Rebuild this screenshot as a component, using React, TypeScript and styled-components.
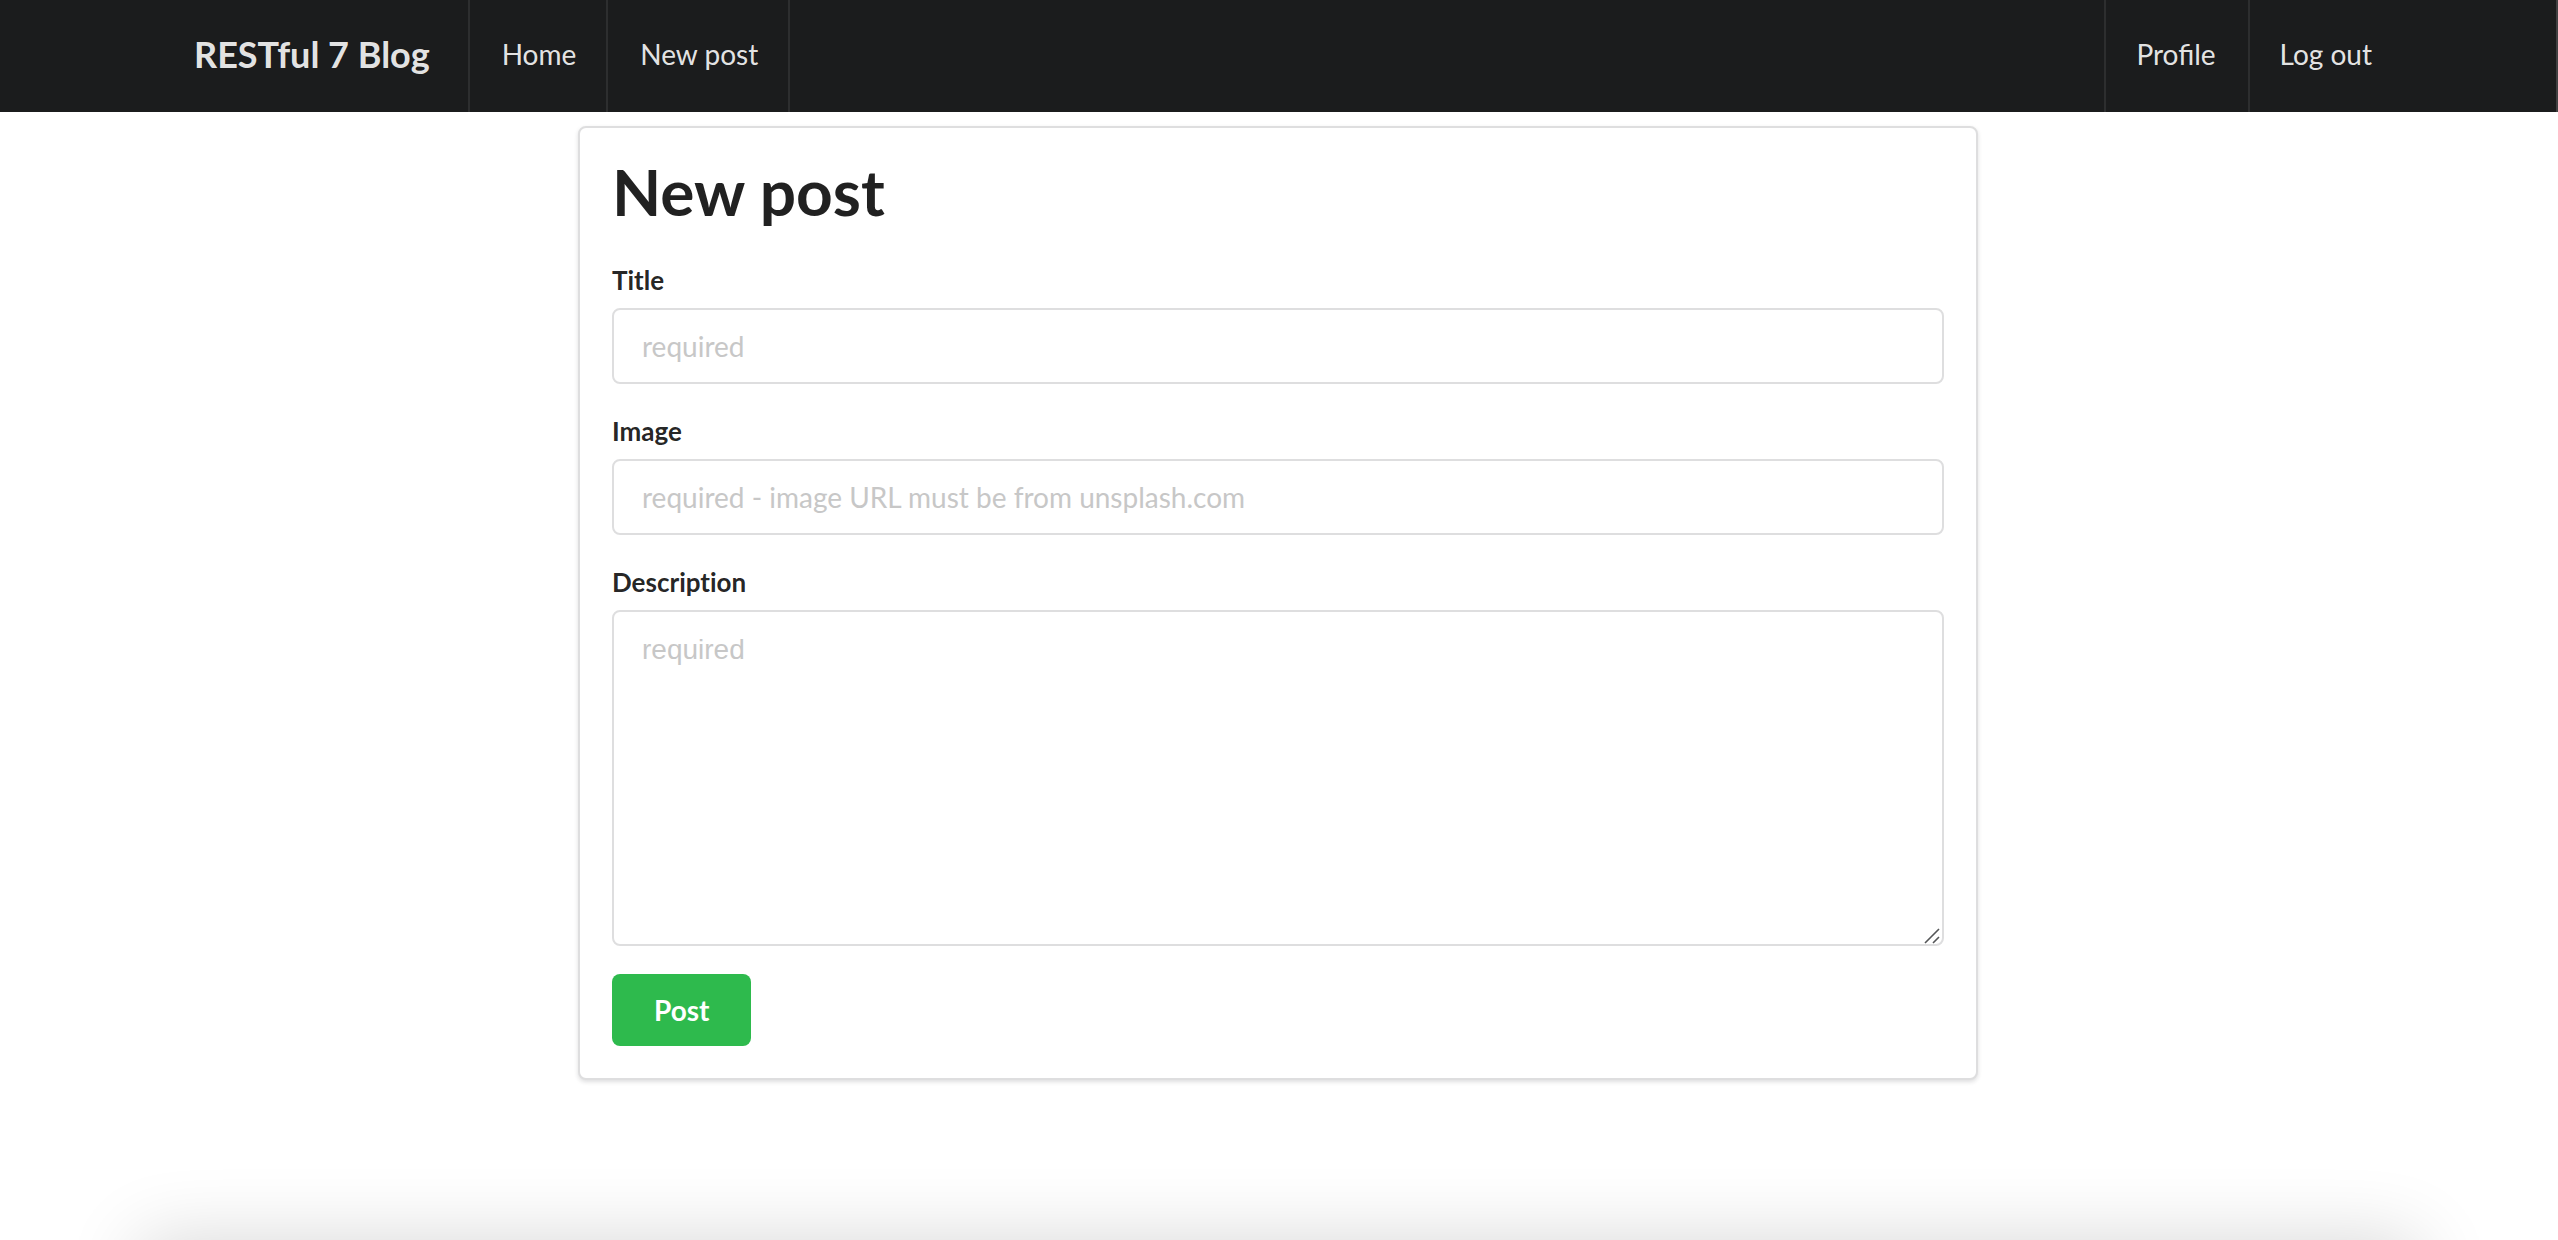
import React from "react";
import styled, { createGlobalStyle } from "styled-components";

const GlobalStyle = createGlobalStyle`
  *, *::before, *::after { box-sizing: border-box; }
  body {
    margin: 0;
    background: #fff;
    color: rgba(0, 0, 0, 0.87);
    font-family: Lato, "Liberation Sans", sans-serif;
    font-size: 28px;
  }
`;

const Page = styled.div`
  min-height: 100vh;
`;

const NavBar = styled.nav`
  height: 112px;
  background: #1b1c1d;
  border-right: 2px solid #414142;
`;

const NavContainer = styled.div`
  display: flex;
  height: 100%;
  width: 100%;
  max-width: 2252px;
  margin: 0 auto;
`;

const NavGroup = styled.div<{ $end?: boolean }>`
  display: flex;
  margin-left: ${(p) => (p.$end ? "auto" : "0")};
`;

const NavLink = styled.a<{ $edge?: "left" | "right" }>`
  display: flex;
  align-items: center;
  padding: ${(p) => (p.$edge === "left" ? "0 32px 4px 30px" : "0 30px 4px 32px")};
  color: rgba(255, 255, 255, 0.9);
  line-height: 36px;
  text-decoration: none;
  border-${(p) => p.$edge ?? "right"}: 2px solid #2d2e2f;
`;

const BrandLink = styled(NavLink)`
  padding: 0 38px 4px 42px;
  font-size: 36px;
  font-weight: 700;
`;

const Main = styled.main`
  padding: 14px 2px 0 0;
`;

const Card = styled.section`
  max-width: 1400px;
  margin: 0 auto;
  padding: 32px;
  background: #fff;
  border: 2px solid #dededf;
  border-radius: 8px;
  box-shadow: 0 2px 4px rgba(34, 36, 38, 0.15);
`;

const Heading = styled.h1`
  margin: 0 0 37px;
  font-size: 64px;
  font-weight: 700;
  line-height: 64px;
`;

const Field = styled.div`
  margin-bottom: 28px;
`;

const Label = styled.label`
  display: block;
  margin-bottom: 8px;
  font-size: 26px;
  font-weight: 700;
  line-height: 39px;
  font-variant-ligatures: none;
`;

const TextInput = styled.input`
  display: block;
  width: 100%;
  height: 76px;
  padding: 0 28px;
  color: inherit;
  background: #fff;
  border: 2px solid #dededf;
  border-radius: 8px;
  font: inherit;
  outline: none;

  &::placeholder {
    color: #c7c7c7;
    opacity: 1;
  }
`;

const TextArea = styled.textarea`
  display: block;
  width: 100%;
  height: 336px;
  padding: 20px 28px;
  color: inherit;
  background: #fff;
  border: 2px solid #dededf;
  border-radius: 8px;
  font-family: "Liberation Sans", Arial, sans-serif;
  font-size: 28px;
  line-height: 36px;
  outline: none;
  resize: none;

  &::placeholder {
    color: #c7c7c7;
    opacity: 1;
  }
`;

const AreaWrap = styled.div`
  position: relative;
`;

const Grip = styled.svg`
  position: absolute;
  right: 4px;
  bottom: 2px;
  width: 16px;
  height: 16px;
  pointer-events: none;
`;

const SubmitButton = styled.button`
  display: block;
  height: 72px;
  padding: 0 42px;
  color: #fff;
  background: #2eba4d;
  border: 0;
  border-radius: 8px;
  font: inherit;
  font-weight: 700;
  cursor: pointer;
`;

const BottomShade = styled.div`
  position: fixed;
  top: 100%;
  left: 140px;
  right: 140px;
  height: 200px;
  box-shadow: 0 0 76px rgba(0, 0, 0, 0.16);
  pointer-events: none;
`;

export default function App() {
  return (
    <>
      <GlobalStyle />
      <Page>
        <NavBar>
          <NavContainer>
            <NavGroup>
              <BrandLink href="#">RESTful 7 Blog</BrandLink>
              <NavLink href="#">Home</NavLink>
              <NavLink href="#">New post</NavLink>
            </NavGroup>
            <NavGroup $end>
              <NavLink href="#" $edge="left">Profile</NavLink>
              <NavLink href="#" $edge="left">Log out</NavLink>
            </NavGroup>
          </NavContainer>
        </NavBar>
        <Main>
          <Card>
            <Heading>New post</Heading>
            <form onSubmit={(e) => e.preventDefault()}>
              <Field>
                <Label htmlFor="title">Title</Label>
                <TextInput id="title" type="text" placeholder="required" />
              </Field>
              <Field>
                <Label htmlFor="image">Image</Label>
                <TextInput
                  id="image"
                  type="text"
                  placeholder="required - image URL must be from unsplash.com"
                />
              </Field>
              <Field>
                <Label htmlFor="description">Description</Label>
                <AreaWrap>
                  <TextArea id="description" placeholder="required" />
                  <Grip viewBox="0 0 16 16" aria-hidden="true">
                    <path d="M1 15L15 1M9 15L15 9" stroke="#555658" strokeWidth="1.6" />
                  </Grip>
                </AreaWrap>
              </Field>
              <SubmitButton type="submit">Post</SubmitButton>
            </form>
          </Card>
        </Main>
      </Page>
      <BottomShade />
    </>
  );
}
